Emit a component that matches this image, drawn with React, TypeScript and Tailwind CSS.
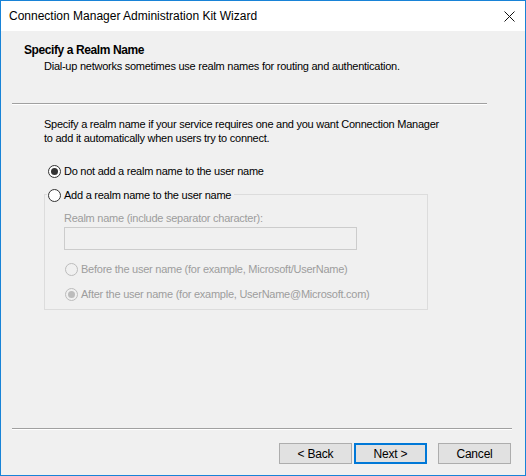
import React from 'react';

function Radio({ checked = false, disabled = false }: { checked?: boolean; disabled?: boolean }) {
  const ring = disabled ? 'border-[#bcbcbc] bg-[#f0f0f0]' : 'border-[#333333] bg-white';
  const dot = disabled ? 'bg-[#bcbcbc]' : 'bg-[#333333]';
  return (
    <span className={`flex h-[13px] w-[13px] shrink-0 items-center justify-center rounded-full border ${ring}`}>
      {checked && <span className={`h-[7px] w-[7px] rounded-full ${dot}`} />}
    </span>
  );
}

function WizButton({ label, primary = false }: { label: string; primary?: boolean }) {
  return (
    <button
      className={`flex h-[21px] w-[73px] items-center justify-center bg-[#e1e1e1] text-[12px] tracking-[-0.2px] text-black ${
        primary ? 'border-2 border-[#0078d7]' : 'border border-[#adadad]'
      }`}
    >
      {label}
    </button>
  );
}

export default function App() {
  return (
    <div
      className="flex h-[476px] w-[526px] flex-col border border-[#1883d7] bg-[#f0f0f0] text-black"
      style={{ fontFamily: '"Liberation Sans", Arial, sans-serif' }}
    >
      {/* title bar */}
      <div className="flex h-[30px] shrink-0 items-center justify-between bg-white pl-[8px] pr-[10px]">
        <span className="text-[12px]">Connection Manager Administration Kit Wizard</span>
        <svg width="11" height="11" viewBox="0 0 11 11" className="mt-[1px]">
          <path d="M0.5 0.5 L10.5 10.5 M10.5 0.5 L0.5 10.5" stroke="#111" strokeWidth="1" />
        </svg>
      </div>

      {/* header */}
      <div className="h-[72px] shrink-0 pl-[23px] pt-[11px]">
        <div className="text-[12px] font-bold leading-[16px] tracking-[-0.4px]">Specify a Realm Name</div>
        <div className="ml-[20px] mt-[1px] text-[11px] leading-[14px] tracking-[-0.25px]">
          Dial-up networks sometimes use realm names for routing and authentication.
        </div>
      </div>

      <div className="ml-[11px] w-[475px] shrink-0">
        <div className="h-px bg-[#a0a0a0]" />
        <div className="h-px bg-white" />
      </div>

      {/* body */}
      <div className="flex flex-col pl-[43px] text-[11px] tracking-[-0.25px]">
        <p className="mt-[12px] leading-[14px]">
          Specify a realm name if your service requires one and you want Connection Manager
          <br />
          to add it automatically when users try to connect.
        </p>

        <div className="ml-[4px] mt-[18px] flex h-[16px] items-center gap-[3px]">
          <Radio checked />
          <span>Do not add a realm name to the user name</span>
        </div>

        <div className="mt-[15px] w-[384px] border border-[#dcdcdc] pb-[7px]">
          <div className="-mt-[8px] ml-[2px] flex h-[16px] w-fit items-center gap-[3px] bg-[#f0f0f0] pr-[3px] pl-[1px]">
            <Radio />
            <span>Add a realm name to the user name</span>
          </div>

          <div className="flex flex-col pl-[19px] text-[#9d9d9d]">
            <div className="mt-[8px] h-[14px] leading-[14px]">Realm name (include separator character):</div>
            <div className="mt-[2px] h-[23px] w-[293px] border border-[#cccccc] bg-[#f0f0f0]" />

            <div className="ml-[1px] mt-[11px] flex h-[16px] items-center gap-[3px]">
              <Radio disabled />
              <span>Before the user name (for example, Microsoft/UserName)</span>
            </div>
            <div className="ml-[1px] mt-[9px] flex h-[16px] items-center gap-[3px]">
              <Radio checked disabled />
              <span>After the user name (for example, UserName@Microsoft.com)</span>
            </div>
          </div>
        </div>
      </div>

      <div className="flex-1" />

      {/* footer */}
      <div className="shrink-0 pb-[11px]">
        <div className="ml-[11px] w-[500px]">
          <div className="h-px bg-[#a0a0a0]" />
          <div className="h-px bg-white" />
        </div>
        <div className="mt-[13px] flex justify-end pr-[14px]">
          <WizButton label="< Back" />
          <div className="ml-[2px]">
            <WizButton label="Next >" primary />
          </div>
          <div className="ml-[11px]">
            <WizButton label="Cancel" />
          </div>
        </div>
      </div>
    </div>
  );
}
